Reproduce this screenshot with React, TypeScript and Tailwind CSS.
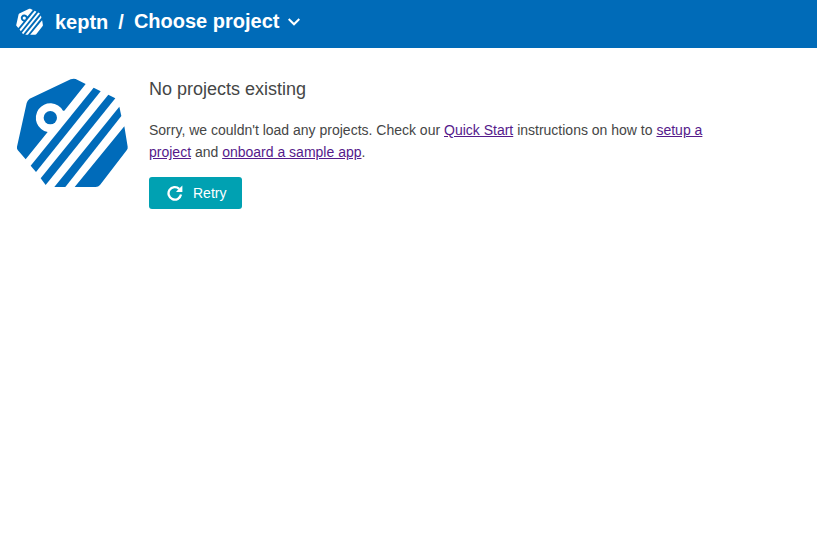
function KeptnLogo({ className }: { className: string }) {
  return (
    <svg viewBox="18 18 336 336" className={className} fill="currentColor" aria-hidden="true">
      <path d="M47 268 L23 240 Q20 236 21 230 L50 99 Q52 91 59 86 L182 28 Q190 25 197 27 L227 42 L163 122 L159 122 A43.5 43.5 0 1 0 113 186 Z" />
      <circle cx="121" cy="143" r="20" />
      <path d="M251 53 L272 64 L78 306 L62 287 Z" />
      <path d="M295 74 L316 85 L107 345 L92 325 Z" />
      <path d="M328 110 L334 138 L166 351 L133 351 Z" />
      <path d="M343 169 L353 230 Q354 236 350 241 L270 345 Q265 351 257 351 L194 351 Z" />
    </svg>
  );
}

function Header() {
  return (
    <header className="flex h-12 items-start bg-[#006bb8] pl-[15.5px] text-[20px] leading-6 font-bold text-white">
      <KeptnLogo className="mt-2 h-[27px] w-[27px]" />
      <span className="mt-[10px] ml-[12.5px]">keptn</span>
      <span className="mt-[10px] ml-[10px]">/</span>
      <span className="mt-[9px] ml-[10px]">Choose project</span>
      <svg viewBox="0 0 12 8" className="mt-[18px] ml-[9px] h-2 w-3" fill="none" stroke="currentColor" strokeWidth="2" aria-hidden="true">
        <path d="M0.7 1 L6 6.3 L11.3 1" />
      </svg>
    </header>
  );
}

const link = "text-[#551a8b] underline";

export default function App() {
  return (
    <div className="min-h-screen bg-white font-['Liberation_Sans',Arial,sans-serif] text-[#454646]">
      <Header />
      <main className="flex pt-7 pl-4">
        <KeptnLogo className="h-28 w-28 shrink-0 text-[#006bba]" />
        <div className="ml-[21px] w-[560px]">
          <h1 className="text-[18px] leading-[26px]">No projects existing</h1>
          <p className="mt-[17px] text-[14px] leading-[22px]">
            Sorry, we couldn't load any projects. Check our{" "}
            <a href="#" className={link}>Quick Start</a> instructions on how to{" "}
            <a href="#" className={link}>setup a project</a> and{" "}
            <a href="#" className={link}>onboard a sample app</a>.
          </p>
          <button className="mt-[14px] flex h-8 w-[93px] items-center rounded-[3px] bg-[#00a1b2] pl-[18px] text-[14px] text-white">
            <svg viewBox="0 0 16 16" className="h-4 w-4" fill="none" aria-hidden="true">
              <path d="M12.2 3.8 A6.3 6.3 0 1 0 14 9.6" stroke="currentColor" strokeWidth="2.3" />
              <path d="M15.4 0.4 V7 H9 L11 4.8 Z" fill="currentColor" />
            </svg>
            <span className="ml-[10px]">Retry</span>
          </button>
        </div>
      </main>
    </div>
  );
}
